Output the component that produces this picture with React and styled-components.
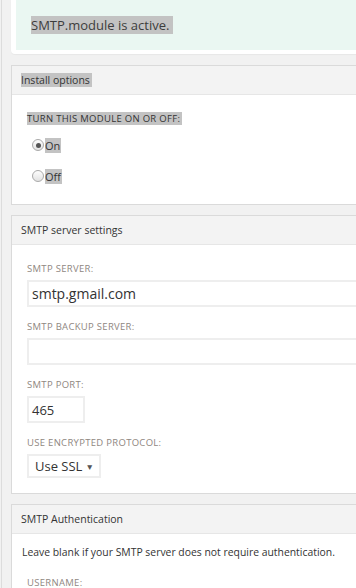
import styled, { createGlobalStyle } from "styled-components";

const GlobalStyle = createGlobalStyle`
  html, body {
    margin: 0;
    padding: 0;
    background: #f1f1f1;
    overflow: hidden;
  }
  body {
    font-family: "Open Sans", "Liberation Sans", sans-serif;
    color: #333;
  }
`;

const Page = styled.div`
  margin-left: 1px;
  border-left: 1px solid #dcdcdc;
  padding-left: 9px;
  width: 420px;
`;

const Notice = styled.div`
  background: #fff;
  border-radius: 0 0 4px 4px;
  padding: 0 0 4px 5px;
  margin-bottom: 11px;
  box-shadow: 0 1px 1px rgba(0, 0, 0, 0.04);
`;

const NoticeInner = styled.div`
  background: #eaf7f2;
  height: 50px;
  display: flex;
  align-items: center;
  padding-left: 15px;
  font-size: 13px;
  color: #3d3d3d;
`;

const Sel = styled.span`
  background: #c3c3c3;
  padding-right: ${(p) => p.$pad || 0}px;
`;

const Panel = styled.section`
  background: #fff;
  border: 1px solid #dadada;
  margin-bottom: 10px;
`;

const PanelHead = styled.div`
  background: #f3f3f3;
  border-bottom: 1px solid #e6e6e6;
  height: 28px;
  display: flex;
  align-items: center;
  padding-left: 9px;
  font-size: 10.5px;
  color: #333;
`;

const PanelBody = styled.div`
  padding: ${(p) => p.$pad || "18px 15px 15px"};
`;

const Label = styled.div`
  font-size: 9.5px;
  line-height: 12px;
  letter-spacing: 0.3px;
  text-transform: uppercase;
  color: ${(p) => (p.$dark ? "#333" : "#8f8781")};
  margin-bottom: ${(p) => p.$mb || 5}px;
  margin-left: ${(p) => p.$ml || 0}px;
`;

const RadioRow = styled.label`
  display: flex;
  align-items: center;
  gap: 1px;
  height: 14px;
  margin: 0 0 17px 5px;
  font-size: 11px;
  &:last-child {
    margin-bottom: 0;
  }
`;

const RadioDot = styled.span`
  box-sizing: border-box;
  width: 12px;
  height: 12px;
  border-radius: 50%;
  border: 1px solid #a9a9a9;
  background: linear-gradient(#fdfdfd, #e2e2e2);
  display: flex;
  align-items: center;
  justify-content: center;
  &::after {
    content: "";
    width: 5px;
    height: 5px;
    border-radius: 50%;
    background: ${(p) => (p.$checked ? "#555" : "transparent")};
  }
`;

const Field = styled.div`
  margin-bottom: 14px;
  &:last-child {
    margin-bottom: 0;
  }
`;

const TextBox = styled.div`
  box-sizing: border-box;
  width: ${(p) => p.$w || "100%"};
  height: ${(p) => p.$h || 27}px;
  border: 2px solid #eeeeee;
  display: flex;
  align-items: center;
  padding-left: 3px;
  font-size: ${(p) => p.$fs || 14}px;
  color: #333;
  white-space: nowrap;
`;

const Select = styled(TextBox)`
  justify-content: space-between;
  padding: 0 5px 0 6px;
  font-size: 13px;
`;

const Caret = styled.span`
  font-size: 8.5px;
  color: #555;
`;

const Hint = styled.p`
  margin: 0 0 18px;
  font-size: 10.4px;
  line-height: 14px;
  color: #333;
`;

export default function App() {
  return (
    <>
      <GlobalStyle />
      <Page>
        <Notice>
          <NoticeInner>
            <Sel $pad={4}>SMTP.module is active.</Sel>
          </NoticeInner>
        </Notice>

        <Panel>
          <PanelHead>
            <Sel $pad={2}>Install options</Sel>
          </PanelHead>
          <PanelBody $pad="18px 15px 21px">
            <Label $dark $mb={13}>
              <Sel $pad={2}>Turn this module on or off:</Sel>
            </Label>
            <RadioRow>
              <RadioDot $checked />
              <Sel $pad={1}>On</Sel>
            </RadioRow>
            <RadioRow>
              <RadioDot />
              <Sel $pad={1}>Off</Sel>
            </RadioRow>
          </PanelBody>
        </Panel>

        <Panel>
          <PanelHead>SMTP server settings</PanelHead>
          <PanelBody>
            <Field>
              <Label>SMTP Server:</Label>
              <TextBox>smtp.gmail.com</TextBox>
            </Field>
            <Field>
              <Label>SMTP Backup Server:</Label>
              <TextBox />
            </Field>
            <Field>
              <Label>SMTP Port:</Label>
              <TextBox $w="58px" $fs={13}>465</TextBox>
            </Field>
            <Field>
              <Label>Use encrypted protocol:</Label>
              <Select $w="74px" $h={24}>
                Use SSL <Caret>▼</Caret>
              </Select>
            </Field>
          </PanelBody>
        </Panel>

        <Panel>
          <PanelHead>SMTP Authentication</PanelHead>
          <PanelBody $pad="11px 10px 10px">
            <Hint>Leave blank if your SMTP server does not require authentication.</Hint>
            <Label $ml={5}>Username:</Label>
          </PanelBody>
        </Panel>
      </Page>
    </>
  );
}
